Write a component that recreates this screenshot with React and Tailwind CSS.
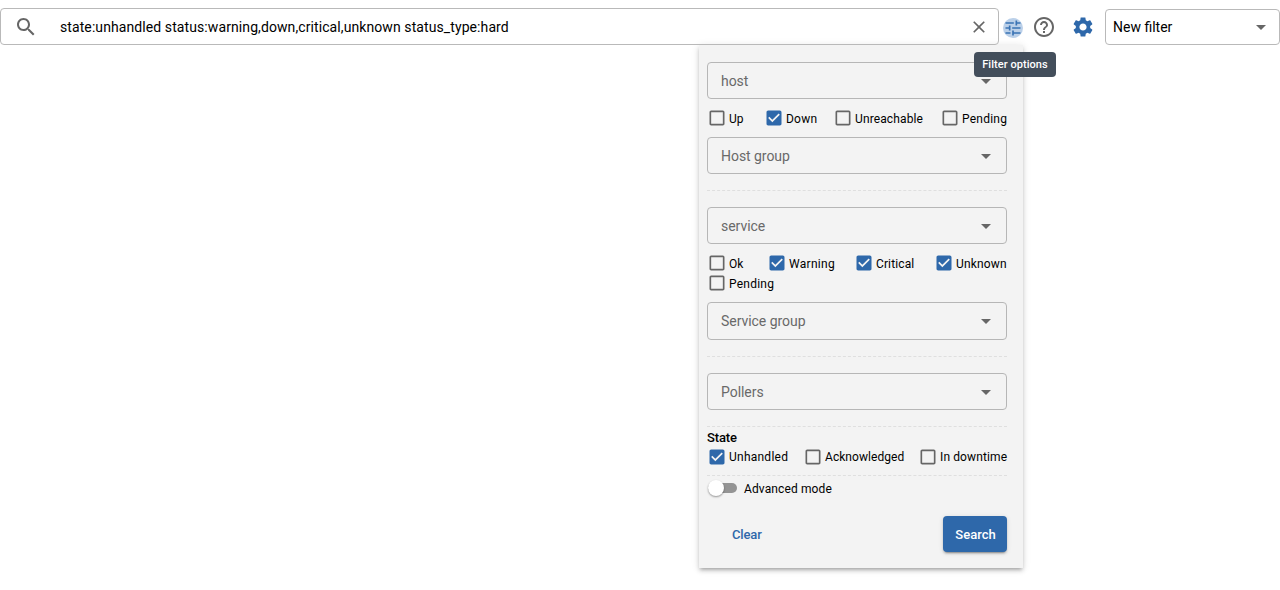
import React from "react";

const PATHS = {
  search:
    "M15.5 14h-.79l-.28-.27C15.41 12.59 16 11.11 16 9.5 16 5.91 13.09 3 9.5 3S3 5.91 3 9.5 5.91 16 9.5 16c1.61 0 3.09-.59 4.23-1.57l.27.28v.79l5 4.99L20.49 19l-4.99-5zm-6 0C7.01 14 5 11.99 5 9.5S7.01 5 9.5 5 14 7.01 14 9.5 11.99 14 9.5 14z",
  close:
    "M19 6.41 17.59 5 12 10.59 6.41 5 5 6.41 10.59 12 5 17.59 6.41 19 12 13.41 17.59 19 19 17.59 13.41 12z",
  tune: "M3 17v2h6v-2H3zM3 5v2h10V5H3zm10 16v-2h8v-2h-8v-2h-2v6h2zM7 9v2H3v2h4v2h2V9H7zm14 4v-2H11v2h10zm-6-4h2V7h4V5h-4V3h-2v6z",
  help: "M11 18h2v-2h-2v2zm1-16C6.48 2 2 6.48 2 12s4.48 10 10 10 10-4.48 10-10S17.52 2 12 2zm0 18c-4.41 0-8-3.59-8-8s3.59-8 8-8 8 3.59 8 8-3.59 8-8 8zm0-14c-2.21 0-4 1.79-4 4h2c0-1.1.9-2 2-2s2 .9 2 2c0 2-3 1.75-3 5h2c0-2.25 3-2.5 3-5 0-2.21-1.79-4-4-4z",
  settings:
    "M19.14 12.94c.04-.3.06-.61.06-.94 0-.32-.02-.64-.07-.94l2.03-1.58c.18-.14.23-.41.12-.61l-1.92-3.32c-.12-.22-.37-.29-.59-.22l-2.39.96c-.5-.38-1.03-.7-1.62-.94l-.36-2.54c-.04-.24-.24-.41-.48-.41h-3.84c-.24 0-.43.17-.47.41l-.36 2.54c-.59.24-1.13.57-1.62.94l-2.39-.96c-.22-.08-.47 0-.59.22L2.74 8.87c-.12.21-.08.47.12.61l2.03 1.58c-.05.3-.09.63-.09.94s.02.64.07.94l-2.03 1.58c-.18.14-.23.41-.12.61l1.92 3.32c.12.22.37.29.59.22l2.39-.96c.5.38 1.03.7 1.62.94l.36 2.54c.05.24.24.41.48.41h3.84c.24 0 .44-.17.47-.41l.36-2.54c.59-.24 1.13-.56 1.62-.94l2.39.96c.22.08.47 0 .59-.22l1.92-3.32c.12-.22.07-.47-.12-.61l-2.01-1.58zM12 15.6c-1.98 0-3.6-1.62-3.6-3.6s1.62-3.6 3.6-3.6 3.6 1.62 3.6 3.6-1.62 3.6-3.6 3.6z",
  arrow: "M7 10l5 5 5-5z",
  unchecked:
    "M19 5v14H5V5h14m0-2H5c-1.1 0-2 .9-2 2v14c0 1.1.9 2 2 2h14c1.1 0 2-.9 2-2V5c0-1.1-.9-2-2-2z",
  checked:
    "M19 3H5c-1.11 0-2 .9-2 2v14c0 1.1.89 2 2 2h14c1.11 0 2-.9 2-2V5c0-1.1-.89-2-2-2zm-9 14l-5-5 1.41-1.41L10 14.17l7.59-7.59L19 8l-9 9z",
};

function Icon({ name, className = "" }) {
  return (
    <svg viewBox="0 0 24 24" fill="currentColor" className={`shrink-0 ${className}`}>
      <path d={PATHS[name]} />
    </svg>
  );
}

function Field({ label, className = "h-[37px]" }) {
  return (
    <div className={`flex items-center justify-between rounded border border-[#b6b6b6] pr-2 pl-[13px] ${className}`}>
      <span className="text-sm tracking-[-0.003em] text-[#696969]">{label}</span>
      <Icon name="arrow" className="size-6 text-[#666]" />
    </div>
  );
}

function Check({ label, checked, text = "pt-0.5 tracking-[0.01em]" }) {
  return (
    <label className="flex h-5 items-center gap-0.5">
      <Icon
        name={checked ? "checked" : "unchecked"}
        className={checked ? "size-5 text-[#2e68aa]" : "size-5 text-[#666]"}
      />
      <span className={`text-xs whitespace-nowrap ${text}`}>{label}</span>
    </label>
  );
}

function Divider({ className = "" }) {
  return <div className={`w-full border-t border-dashed border-[#dfdfdf] ${className}`} />;
}

function FilterPanel() {
  return (
    <section className="ml-[699px] flex h-[523px] w-[324px] flex-col bg-[#f3f3f3] pt-[17px] pr-4 pl-2 shadow-[0_3px_3px_-2px_rgba(0,0,0,0.2),0_3px_4px_0_rgba(0,0,0,0.14),0_1px_8px_0_rgba(0,0,0,0.12)]">
      <Field label="host" />
      <div className="mt-[9px] flex justify-between">
        <Check label="Up" text="w-[19px] pt-0.5" />
        <Check label="Down" checked text="w-[31px] pt-0.5 tracking-[0.02em]" />
        <Check label="Unreachable" text="w-[69px] pt-0.5 tracking-[0.01em]" />
        <Check label="Pending" text="w-[45px] pt-0.5 tracking-[0.02em]" />
      </div>
      <Field label="Host group" className="mt-[9px] h-[37px]" />
      <Divider className="mt-4" />

      <Field label="service" className="mt-4 h-[37px]" />
      <div className="mt-[9px] flex justify-between">
        <Check label="Ok" text="w-[19px] pt-0.5" />
        <Check label="Warning" checked text="w-[46px] pt-0.5 tracking-[0.025em]" />
        <Check label="Critical" checked text="w-[39px] pt-0.5 tracking-[0.01em]" />
        <Check label="Unknown" checked text="w-[51px] pt-0.5 tracking-[0.015em]" />
      </div>
      <div className="flex">
        <Check label="Pending" text="w-[45px] pt-0.5 tracking-[0.02em]" />
      </div>
      <Field label="Service group" className="mt-[9px] h-[38px]" />
      <Divider className="mt-4" />

      <Field label="Pollers" className="mt-4 h-[37px]" />
      <Divider className="mt-4" />

      <h2 className="h-5 pt-px text-[13px] leading-5 font-medium tracking-[-0.01em]">State</h2>
      <div className="flex justify-between">
        <Check label="Unhandled" checked text="w-[60px] tracking-[0.02em]" />
        <Check label="Acknowledged" text="w-[79px] tracking-[0.005em]" />
        <Check label="In downtime" text="w-[67px] tracking-[0.01em]" />
      </div>
      <Divider className="mt-2" />

      <div className="mt-[2px] flex h-5 items-center gap-[7px]">
        <div className="ml-px flex h-[10px] w-[29px] items-center rounded-full bg-[#949494]">
          <div className="size-4 shrink-0 rounded-full bg-white shadow-[0_1px_2px_rgba(0,0,0,0.4)]" />
        </div>
        <span className="pt-0.5 text-xs tracking-[0.01em]">Advanced mode</span>
      </div>

      <div className="mt-[18px] flex h-9 items-center justify-between text-[13px] font-medium">
        <button className="ml-[25px] pt-0.5 tracking-[-0.01em] text-[#2e68aa]">Clear</button>
        <button className="h-9 w-16 rounded bg-[#2e68aa] pt-0.5 pl-px text-white shadow-[0_3px_1px_-2px_rgba(0,0,0,0.2),0_2px_2px_0_rgba(0,0,0,0.14),0_1px_5px_0_rgba(0,0,0,0.12)]">
          Search
        </button>
      </div>
    </section>
  );
}

export default function App() {
  return (
    <main className="relative h-[590px] w-[1280px] overflow-hidden bg-white font-['Roboto',sans-serif] text-black">
      <header className="flex h-[45px] items-start pt-2">
        <div className="flex h-[37px] w-[999px] items-center rounded border border-[#b9b9b9] pr-[9px] pl-[13px]">
          <Icon name="search" className="size-6 text-[#666]" />
          <span className="ml-[22px] flex-1 text-sm tracking-[0.0065em]">
            state:unhandled status:warning,down,critical,unknown status_type:hard
          </span>
          <Icon name="close" className="size-5 text-[#666]" />
        </div>
        <div className="mt-[10px] ml-1 flex size-5 items-center justify-center rounded-full bg-[#bbd0e9]">
          <Icon name="tune" className="size-5 text-[#3a73b4]" />
        </div>
        <Icon name="help" className="mt-[7px] ml-[9px] size-6 text-[#666]" />
        <Icon name="settings" className="mt-[7px] ml-[15px] size-6 text-[#2e68aa]" />
        <div className="mt-px ml-[10px] flex h-9 w-[175px] items-center justify-between rounded border border-[#b9b9b9] pr-[6px] pl-[7px]">
          <span className="text-sm">New filter</span>
          <Icon name="arrow" className="size-6 text-[#666]" />
        </div>
      </header>
      <FilterPanel />
      <div className="absolute top-[52px] left-[974px] flex h-[25px] w-[82px] items-center justify-center rounded bg-[#434e5b] pt-px text-[11px] font-medium tracking-[0.005em] text-white">
        Filter options
      </div>
    </main>
  );
}
